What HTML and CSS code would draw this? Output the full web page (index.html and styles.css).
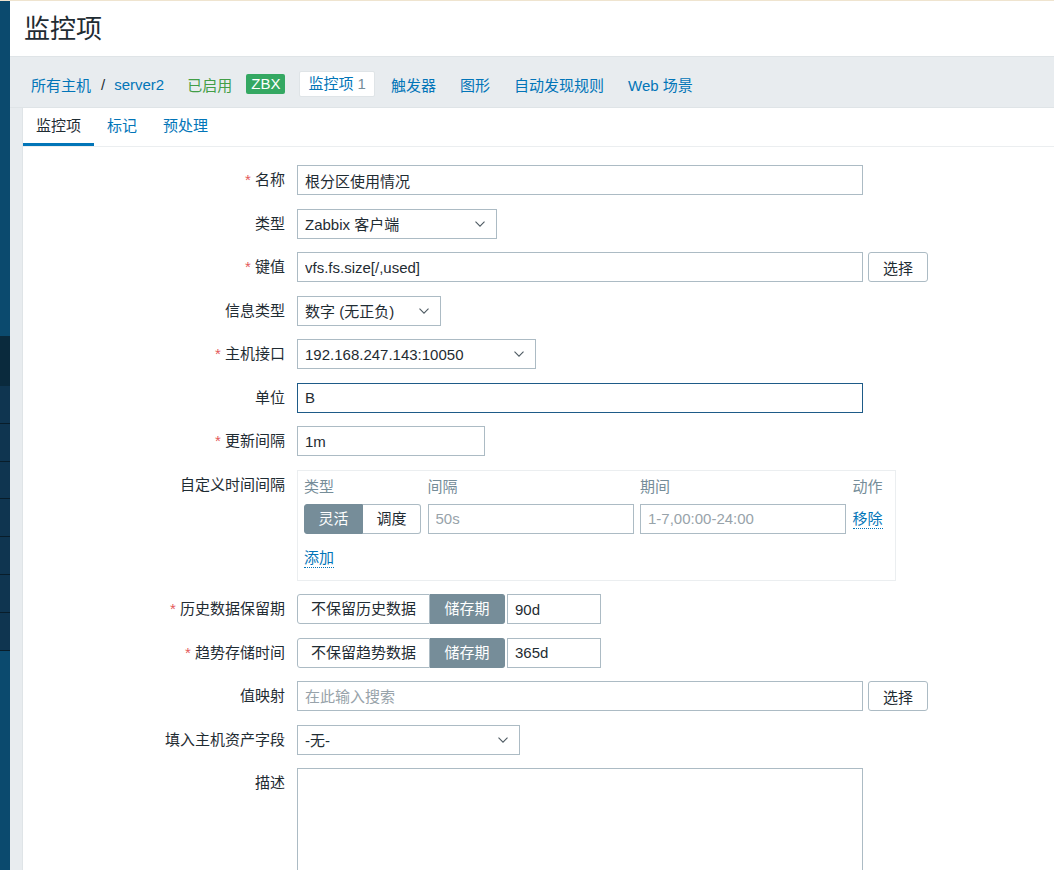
FILE: index.html
```html
<!DOCTYPE html>
<html lang="zh-CN">
<head>
    <meta charset="UTF-8">
    <meta name="viewport" content="width=device-width, initial-scale=1.0">
    <title>监控项</title>
    <link rel="stylesheet" href="styles.css">
</head>
<body>
    <div class="layout">
        <nav class="sidebar">
            <div class="nav_top"></div>
            <div class="nav_sel"></div>
            <div class="nav_item"></div>
            <div class="nav_item"></div>
            <div class="nav_item"></div>
            <div class="nav_item"></div>
            <div class="nav_item"></div>
            <div class="nav_item"></div>
            <div class="nav_item"></div>
        </nav>
        <main class="main">
            <header class="page_header">
                <h1>监控项</h1>
            </header>
            <div class="breadcrumb">
                <a href="#" class="crumb_first">所有主机</a>
                <span class="crumb_sep">/</span>
                <a href="#">server2</a>
                <span class="status_on">已启用</span>
                <span class="badge_zbx">ZBX</span>
                <span class="crumb_sel"><a href="#">监控项</a> <span class="count">1</span></span>
                <a href="#" class="crumb_link first">触发器</a>
                <a href="#" class="crumb_link">图形</a>
                <a href="#" class="crumb_link">自动发现规则</a>
                <a href="#" class="crumb_link">Web 场景</a>
            </div>
            <div class="panel">
                <ul class="tabs">
                    <li class="active">监控项</li>
                    <li><a href="#">标记</a></li>
                    <li><a href="#">预处理</a></li>
                </ul>
                <form class="item_form">
                    <div class="form_label"><span class="req">*</span> 名称</div>
                    <div class="form_field"><input class="input w_xl" value="根分区使用情况"></div>

                    <div class="form_label">类型</div>
                    <div class="form_field">
                        <div class="select w_type"><span>Zabbix 客户端</span><svg width="10" height="6" viewBox="0 0 10 6"><polyline points="0.5,0.6 5,5.2 9.5,0.6" fill="none" stroke="#4f5b63" stroke-width="1.1"/></svg></div>
                    </div>

                    <div class="form_label"><span class="req">*</span> 键值</div>
                    <div class="form_field">
                        <input class="input w_xl" value="vfs.fs.size[/,used]">
                        <button type="button" class="btn_alt">选择</button>
                    </div>

                    <div class="form_label">信息类型</div>
                    <div class="form_field">
                        <div class="select w_info"><span>数字 (无正负)</span><svg width="10" height="6" viewBox="0 0 10 6"><polyline points="0.5,0.6 5,5.2 9.5,0.6" fill="none" stroke="#4f5b63" stroke-width="1.1"/></svg></div>
                    </div>

                    <div class="form_label"><span class="req">*</span> 主机接口</div>
                    <div class="form_field">
                        <div class="select w_iface"><span>192.168.247.143:10050</span><svg width="10" height="6" viewBox="0 0 10 6"><polyline points="0.5,0.6 5,5.2 9.5,0.6" fill="none" stroke="#4f5b63" stroke-width="1.1"/></svg></div>
                    </div>

                    <div class="form_label">单位</div>
                    <div class="form_field"><input class="input w_xl focus" value="B"></div>

                    <div class="form_label"><span class="req">*</span> 更新间隔</div>
                    <div class="form_field"><input class="input w_sm" value="1m"></div>

                    <div class="form_label">自定义时间间隔</div>
                    <div class="form_field">
                        <div class="intervals">
                            <div class="intervals_grid">
                                <div class="col_head">类型</div>
                                <div class="col_head">间隔</div>
                                <div class="col_head">期间</div>
                                <div class="col_head">动作</div>

                                <div class="seg">
                                    <span class="on">灵活</span><span>调度</span>
                                </div>
                                <input class="input" placeholder="50s">
                                <input class="input" placeholder="1-7,00:00-24:00">
                                <div class="act_cell"><a href="#" class="link_dot">移除</a></div>
                            </div>
                            <div class="add_row"><a href="#" class="link_dot">添加</a></div>
                        </div>
                    </div>

                    <div class="form_label"><span class="req">*</span> 历史数据保留期</div>
                    <div class="form_field tight">
                        <div class="seg seg_wide">
                            <span>不保留历史数据</span><span class="on">储存期</span>
                        </div>
                        <input class="input w_xs" value="90d">
                    </div>

                    <div class="form_label"><span class="req">*</span> 趋势存储时间</div>
                    <div class="form_field tight">
                        <div class="seg seg_wide">
                            <span>不保留趋势数据</span><span class="on">储存期</span>
                        </div>
                        <input class="input w_xs" value="365d">
                    </div>

                    <div class="form_label">值映射</div>
                    <div class="form_field">
                        <input class="input w_xl" placeholder="在此输入搜索">
                        <button type="button" class="btn_alt">选择</button>
                    </div>

                    <div class="form_label">填入主机资产字段</div>
                    <div class="form_field">
                        <div class="select w_inv"><span>-无-</span><svg width="10" height="6" viewBox="0 0 10 6"><polyline points="0.5,0.6 5,5.2 9.5,0.6" fill="none" stroke="#4f5b63" stroke-width="1.1"/></svg></div>
                    </div>

                    <div class="form_label">描述</div>
                    <div class="form_field"><textarea class="textarea w_xl"></textarea></div>
                </form>
            </div>
        </main>
    </div>
</body>
</html>
```

FILE: styles.css
```css
*{margin:0;padding:0;box-sizing:border-box;}
body{font-family:"Liberation Sans","Noto Sans CJK SC",sans-serif;font-size:15px;color:#1f2c33;border-top:1px solid #efe4cf;height:870px;overflow:hidden;}
a{color:#0275b8;text-decoration:none;}
ul{list-style:none;}
.layout{display:flex;height:869px;}

/* sidebar (collapsed) */
.sidebar{width:10px;flex-shrink:0;display:flex;flex-direction:column;background:#0b4a6e;}
.sidebar .nav_top{height:335px;flex-shrink:0;}
.sidebar .nav_sel{height:50px;flex-shrink:0;background:#0a2a3d;}
.sidebar .nav_item{height:37.8px;flex-shrink:0;background:#0f3550;border-bottom:1px solid #081d2a;}

.main{flex:1;display:flex;flex-direction:column;background:#e8ecef;min-height:0;}
.page_header{height:56px;flex-shrink:0;display:flex;align-items:center;padding-left:14px;background:#fff;border-bottom:1px solid #dfe4e7;}
.page_header h1{font-size:26px;font-weight:normal;line-height:30px;}

/* breadcrumb */
.breadcrumb{height:51px;flex-shrink:0;display:flex;align-items:center;padding:4px 0 0 21px;border-bottom:1px solid #dfe4e7;white-space:nowrap;}
.breadcrumb .crumb_sep{margin:0 9px 0 10px;color:#1f2c33;}
.breadcrumb .status_on{margin-left:23px;color:#429e47;}
.breadcrumb .badge_zbx{margin-left:14px;height:20px;line-height:20px;padding:0 5px;background:#34a862;color:#fff;border-radius:2px;}
.breadcrumb .crumb_sel{margin-left:14px;height:26px;line-height:24px;padding:0 8px;background:#fff;border:1px solid #dfe4e7;border-radius:2px;}
.breadcrumb .crumb_sel .count{color:#768d99;}
.breadcrumb .crumb_link{margin-left:24px;}
.breadcrumb .crumb_link.first{margin-left:16px;}

/* panel + tabs */
.panel{flex:1;min-height:0;overflow:hidden;margin-left:12px;background:#fff;border-left:1px solid #dfe4e7;}
.tabs{display:flex;height:39px;border-bottom:1px solid #ebeef0;}
.tabs li{height:38px;line-height:36px;padding:0 13px;border-bottom:3px solid transparent;}
.tabs li.active{border-bottom-color:#0275b8;color:#1f2c33;}

/* form */
.item_form{display:grid;grid-template-columns:262px 1fr;column-gap:12px;row-gap:13.5px;padding-top:18px;}
.form_label{line-height:30px;text-align:right;white-space:nowrap;}
.form_label .req{color:#e45959;}
.form_field{display:flex;align-items:flex-start;gap:5px;}
.form_field.tight{gap:2px;}

.input{height:30px;padding:0 7px;border:1px solid #acbbc4;background:#fff;font:inherit;color:#1f2c33;outline:none;border-radius:0;}
.input::placeholder{color:#98a3aa;}
.input.focus{border-color:#1e5b88;}
.w_xl{width:566px;}
.w_sm{width:188px;}
.w_xs{width:94px;}

.select{height:30px;display:flex;align-items:center;justify-content:space-between;padding:0 11px 0 7px;border:1px solid #acbbc4;background:#fff;}
.w_type{width:200px;}
.w_info{width:144px;}
.w_iface{width:239px;}
.w_inv{width:223px;}

.btn_alt{width:60px;height:30px;border:1px solid #acbbc4;border-radius:3px;background:#fff;font:inherit;color:#1f2c33;}

.seg{display:flex;height:30px;}
.seg span{line-height:28px;padding:0 14px;border:1px solid #acbbc4;background:#fff;white-space:nowrap;}
.seg span:first-child{border-radius:3px 0 0 3px;}
.seg span:last-child{border-radius:0 3px 3px 0;border-left:0;}
.seg span.on{background:#768d99;border-color:#768d99;color:#fff;}
.seg_wide span:first-child{padding:0 13px;}
.seg_wide span:last-child{padding:0 14.5px;}

/* custom intervals box */
.intervals{width:599px;border:1px solid #ebeef0;padding:6px 6px 12px;}
.intervals_grid{display:grid;grid-template-columns:117px 206px 206px auto;column-gap:6.5px;row-gap:7px;}
.intervals .col_head{line-height:20px;color:#768d99;}
.intervals .seg span{padding:0;flex:1;text-align:center;}
.intervals .act_cell{line-height:30px;}
.link_dot{display:inline-block;line-height:18px;border-bottom:1px dotted #0275b8;}
.add_row{margin-top:15px;}

.textarea{height:140px;border:1px solid #acbbc4;font:inherit;resize:none;outline:none;}
```
